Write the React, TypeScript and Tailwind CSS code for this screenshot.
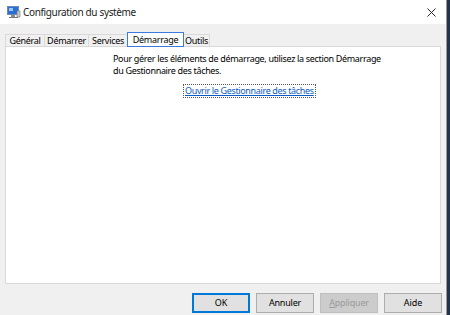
import React from 'react'

const font = { fontFamily: '"Noto Sans", "Segoe UI", sans-serif' }

function AppIcon() {
  return (
    <svg width="15" height="14" viewBox="0 0 15 14">
      <rect x="1" y="1" width="12" height="9" fill="#6b8bb0" />
      <rect x="2" y="2" width="10" height="7" fill="#2a6fd6" />
      <rect x="3" y="3" width="4" height="3" fill="#9fc4f0" />
      <rect x="5" y="10" width="4" height="2" fill="#8a8a8a" />
      <rect x="3" y="12" width="9" height="1" fill="#7a7a7a" />
      <rect x="11" y="6" width="3" height="6" fill="#c9c9c9" stroke="#777" strokeWidth="0.6" />
    </svg>
  )
}

// tab label + width in px
const tabs: [string, string][] = [
  ['Général', 'w-[40px]'],
  ['Démarrer', 'w-[45px]'],
  ['Services', 'w-[40px]'],
  ['Démarrage', 'w-[57px]'],
  ['Outils', 'w-[27px]'],
]

export default function App() {
  return (
    <div className="w-[450px] h-[315px] flex bg-[#22344a] overflow-hidden" style={font}>
      <div className="w-[447px] h-full flex flex-col bg-[#f0f0f0] border-r border-[#9a9a9a]">
        {/* title bar */}
        <div className="h-[24px] bg-white flex items-center pl-[6px] pr-[10px] shrink-0">
          <AppIcon />
          <span className="ml-[2px] text-[10px] text-[#1a1a1a] leading-none tracking-[-0.35px]">Configuration du système</span>
          <svg className="ml-auto" width="9" height="9" viewBox="0 0 9 9">
            <path d="M0.5 0.5 L8.5 8.5 M8.5 0.5 L0.5 8.5" stroke="#222" strokeWidth="1" />
          </svg>
        </div>

        {/* tabs */}
        <div className="px-[5px] flex items-end h-[22px] shrink-0">
          {tabs.map(([t, w], i) =>
            t === 'Démarrage' ? (
              <div
                key={t}
                className={`${w} h-[15px] flex items-center justify-center bg-white border border-[#3b7be0] text-[9px] tracking-[-0.3px] text-black leading-none -mb-px -ml-px relative z-10`}
              >
                {t}
              </div>
            ) : (
              <div
                key={t}
                className={`${w} h-[12px] flex items-center justify-center bg-[#f0f0f0] border border-b-0 border-[#d9d9d9] text-[9px] tracking-[-0.3px] text-black leading-none ${i === 0 ? '' : '-ml-px'}`}
              >
                {t}
              </div>
            )
          )}
        </div>

        {/* panel */}
        <div className="mx-[5px] h-[238px] bg-white border border-[#d9d9d9] shrink-0 flex flex-col items-start pl-[107px]">
          <div className="pt-[6px] text-[9px] tracking-[-0.33px] leading-[12px] text-black whitespace-nowrap">
            Pour gérer les éléments de démarrage, utilisez la section Démarrage
            <br />
            du Gestionnaire des tâches.
          </div>
          <div className="mt-[8px] ml-[71px] px-px outline outline-1 outline-dotted outline-[#555] text-[9px] tracking-[-0.35px] leading-[12px] text-[#0a5bc4] underline whitespace-nowrap">
            Ouvrir le Gestionnaire des tâches
          </div>
        </div>

        {/* buttons */}
        <div className="flex justify-end gap-[6px] pr-[4px] pt-[9px]">
          <div className="w-[58px] h-[20px] flex items-center justify-center bg-[#e1e1e1] border-2 border-[#0078d7] text-[9px] text-black">
            OK
          </div>
          <div className="w-[58px] h-[20px] flex items-center justify-center bg-[#e1e1e1] border border-[#adadad] text-[9px] tracking-[-0.2px] text-black">
            Annuler
          </div>
          <div className="w-[58px] h-[20px] flex items-center justify-center bg-[#cccccc] border border-[#bfbfbf] text-[9px] tracking-[-0.2px] text-[#9a9a9a]">
            <span><span className="underline">A</span>ppliquer</span>
          </div>
          <div className="w-[58px] h-[20px] flex items-center justify-center bg-[#e1e1e1] border border-[#adadad] text-[9px] text-black">
            Aide
          </div>
        </div>
      </div>
    </div>
  )
}
